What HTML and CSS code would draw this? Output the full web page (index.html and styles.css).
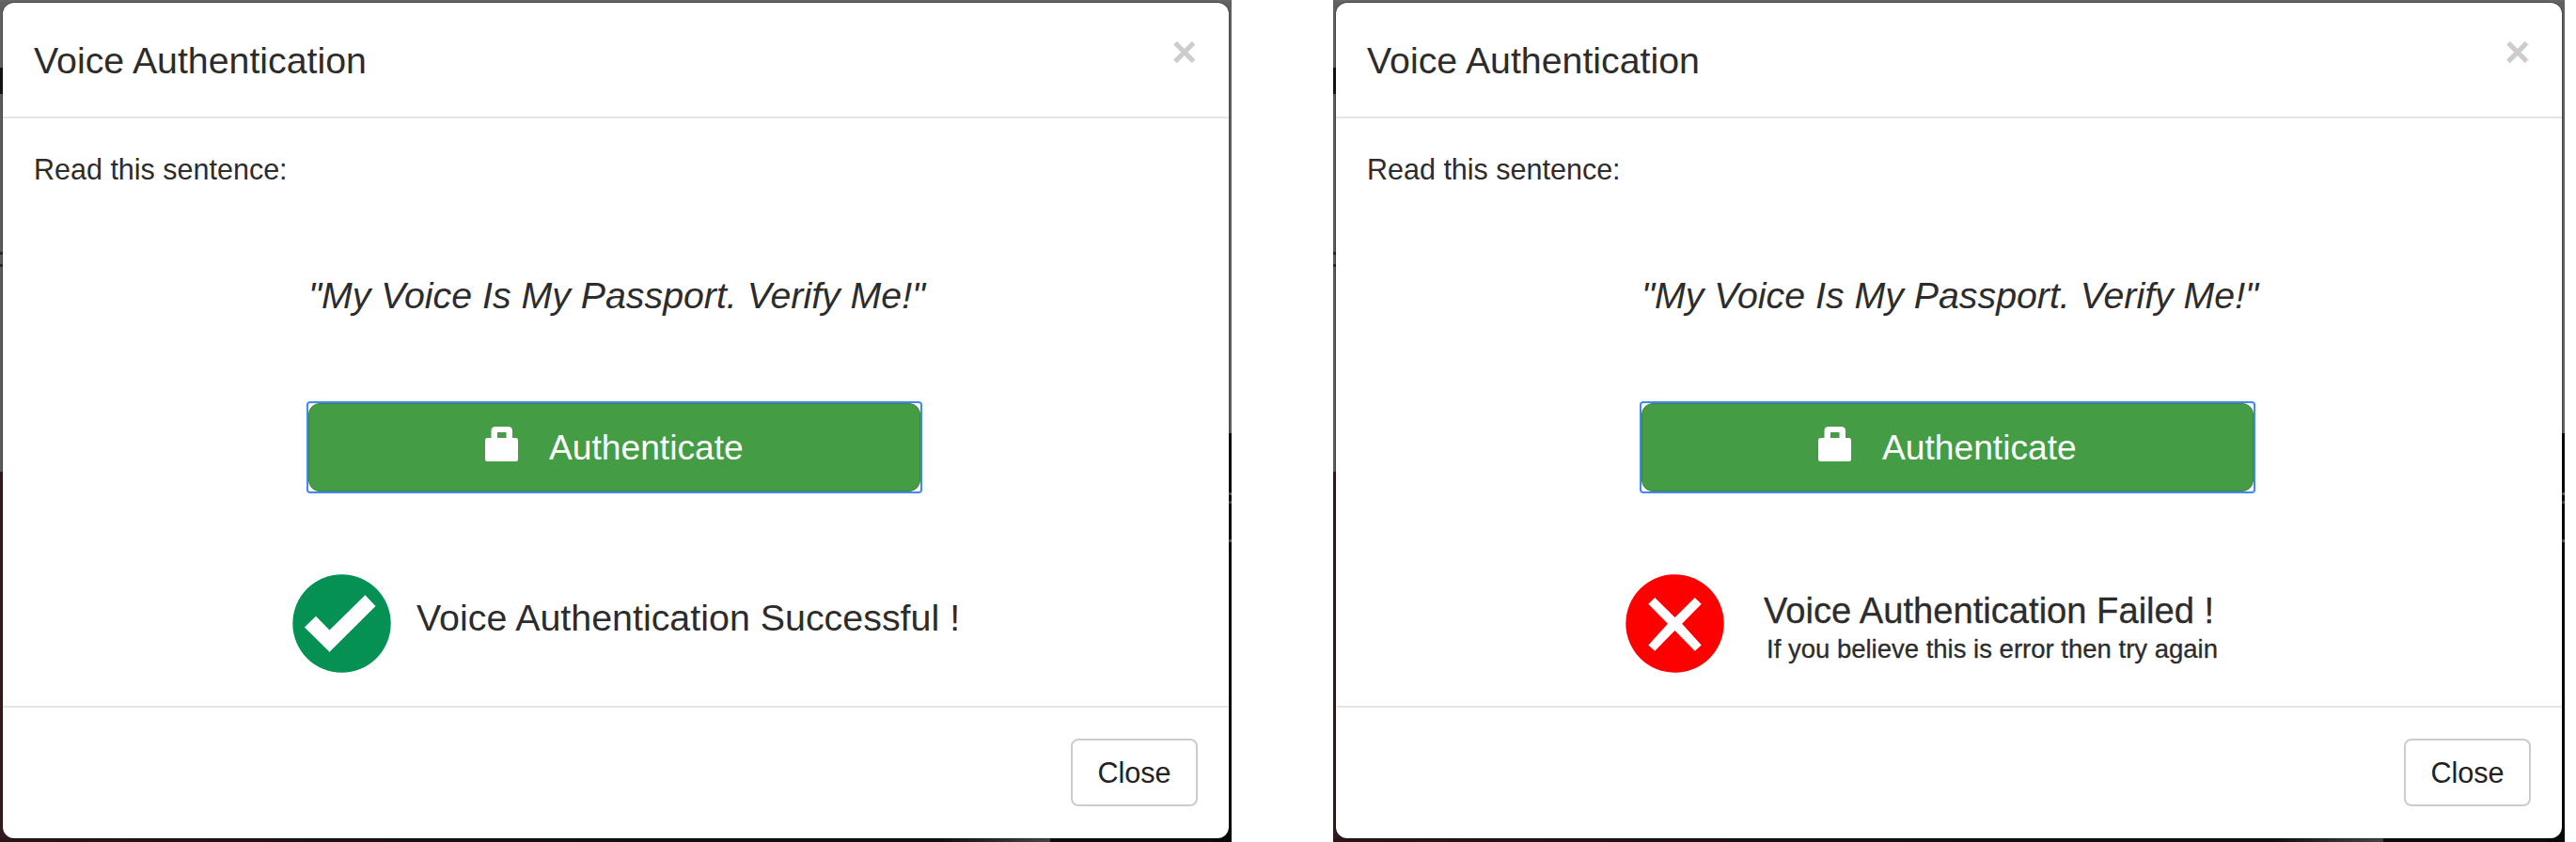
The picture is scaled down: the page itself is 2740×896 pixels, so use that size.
FILE: index.html
```html
<!DOCTYPE html>
<html lang="en">
<head>
<meta charset="utf-8">
<title>Voice Authentication</title>
<link rel="stylesheet" href="styles.css">
</head>
<body>
<main class="screens">
  <section class="backdrop">
    <div class="modal">
      <header class="modal-header"><h4 class="title">Voice Authentication</h4><span class="dismiss">×</span></header>
      <div class="modal-body">
        <p class="lead">Read this sentence:</p>
        <p class="phrase">"My Voice Is My Passport. Verify Me!"</p>
        <div class="focus-ring"><button class="auth"><svg class="lock" viewBox="0 0 36 38"><path fill="#fff" fill-rule="evenodd" d="M2.500 12H6.500V4.500Q6.500 0 11 0H24.500Q29 0 29 4.500V12H32.500Q35 12 35 14.500V34.500Q35 37 32.500 37H2.500Q0 37 0 34.500V14.500Q0 12 2.500 12ZM13 6V12H22.500V6Z"/></svg><span>Authenticate</span></button></div>
        <div class="result">
          <svg class="badge" viewBox="0 0 105 105"><circle cx="52.500" cy="52.500" r="52.200" fill="#049153"/><path fill="#fff" d="M77.400 22.300 88.500 34 39.500 82.800 12.900 56.400 25 44.700 39.500 59.600Z"/></svg>
          <div class="message"><p class="status">Voice Authentication Successful !</p></div>
        </div>
      </div>
      <footer class="modal-footer"><button class="close">Close</button></footer>
    </div>
  </section>
  <section class="backdrop">
    <div class="modal">
      <header class="modal-header"><h4 class="title">Voice Authentication</h4><span class="dismiss">×</span></header>
      <div class="modal-body">
        <p class="lead">Read this sentence:</p>
        <p class="phrase">"My Voice Is My Passport. Verify Me!"</p>
        <div class="focus-ring"><button class="auth"><svg class="lock" viewBox="0 0 36 38"><path fill="#fff" fill-rule="evenodd" d="M2.500 12H6.500V4.500Q6.500 0 11 0H24.500Q29 0 29 4.500V12H32.500Q35 12 35 14.500V34.500Q35 37 32.500 37H2.500Q0 37 0 34.500V14.500Q0 12 2.500 12ZM13 6V12H22.500V6Z"/></svg><span>Authenticate</span></button></div>
        <div class="result">
          <svg class="badge" viewBox="0 0 105 105"><circle cx="52.500" cy="52.500" r="52.200" fill="#fe0000"/><path fill="#fff" d="M31.200 25 52.500 45.900 73.800 25 80.700 31.800 60.100 52.700 80.700 75.500 73.800 81.700 52.500 60 31.200 81.700 24.300 75.500 44.900 52.700 24.300 31.800Z"/></svg>
          <div class="message failed"><p class="status">Voice Authentication Failed !</p><p class="hint">If you believe this is error then try again</p></div>
        </div>
      </div>
      <footer class="modal-footer"><button class="close">Close</button></footer>
    </div>
  </section>
</main>
</body>
</html>
```
FILE: styles.css
```css
* { box-sizing: border-box; }
body { margin: 0; background: #fff; color: #2c2c2c; font-family: "Liberation Sans", Arial, sans-serif; }
p, h4 { margin: 0; font-weight: 400; white-space: nowrap; }
button { font: inherit; }
.screens { display: flex; gap: 108px; height: 896px; }
.backdrop {
  width: 1310px; height: 896px; padding: 3px 3px 4px;
  background:
    linear-gradient(#686868, #606060) 0 0 / 100% 3px no-repeat,
    linear-gradient(90deg, #2a1519 0, #181013 400px, #101010 700px, #101010 1000px, #444 1117px) 0 100% / 1117px 4px no-repeat,
    linear-gradient(#606060 0 72px, #171312 72px 100px, #5c5c5c 100px 268px, #2a2820 268px 271px, #5c5c5c 271px 281px, #2a2820 281px 284px, #5c5c5c 284px 502px, #321a1e 502px) 0 0 / 20px 100% no-repeat,
    linear-gradient(#606060 0 461px, #080808 461px 524px, #555 524px 527px, #080808 527px 533px, #444 533px 536px, #080808 536px 574px, #555 574px 577px, #080808 577px) 100% 0 / 20px 100% no-repeat,
    #0c0c0c;
}
.modal { width: 1304px; height: 889px; background: #fff; border-radius: 12px; display: flex; flex-direction: column; box-shadow: 0 0 0 1px rgba(0,0,0,.25); }
.modal-header { height: 123px; border-bottom: 2px solid #e5e5e5; display: flex; justify-content: space-between; padding: 40px 34px 0 33px; }
.title { font-size: 39.300px; line-height: 44px; margin-top: -1px; }
.dismiss { font-size: 46px; font-weight: 700; line-height: 46px; color: #ccc; margin-top: -11px; }
.modal-body { height: 625px; display: flex; flex-direction: column; padding: 34px 34px 0 33px; }
.lead { font-size: 30.500px; line-height: 40px; }
.phrase { font-size: 39.300px; line-height: 44px; font-style: italic; margin: 92px 0 0 292px; }
.focus-ring { width: 651px; height: 94px; margin: 93px 0 0 292px; border-radius: 2px; box-shadow: 0 0 0 2px #4189f2; flex: none; }
.auth { width: 651px; height: 94px; padding: 0 0 0 187px; border: 1px solid #398439; border-radius: 12px; background: #449d44; color: #fff; font-size: 37.200px; display: flex; align-items: center; text-align: left; }
.lock { width: 36px; height: 38px; margin: -7px 32px 0 0; flex: none; }
.result { display: flex; margin: 88px 0 0 275px; }
.badge { width: 105px; height: 105px; flex: none; }
.message { margin: 23px 0 0 27px; }
.status { font-size: 39.400px; line-height: 46px; }
.failed { margin: 16px 0 0 42px; -webkit-text-stroke: .3px #2c2c2c; }
.failed .status { font-size: 38.150px; }
.hint { font-size: 27.500px; line-height: 32px; margin: 2px 0 0 3px; }
.modal-footer { height: 141px; border-top: 2px solid #e5e5e5; display: flex; justify-content: flex-end; padding: 33px 33px 0; }
.close { width: 135px; height: 72px; border: 2px solid #ccc; border-radius: 8px; background: #fff; color: #222; font-size: 30.600px; padding: 0; }
```
